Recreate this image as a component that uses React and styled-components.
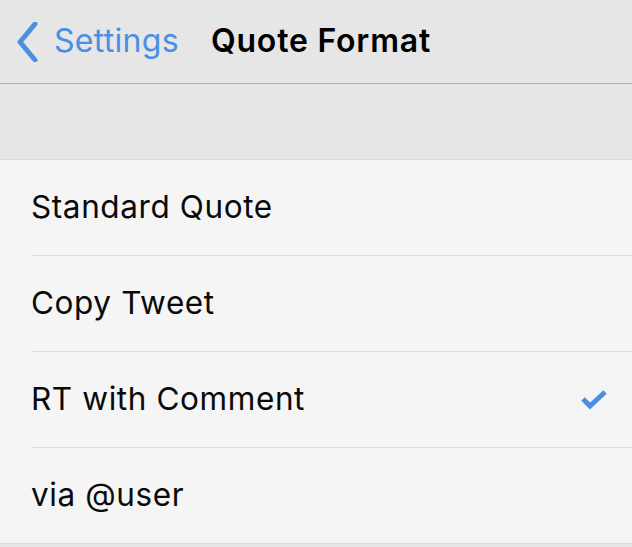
import styled, { createGlobalStyle } from "styled-components";

const GlobalStyle = createGlobalStyle`
  html, body {
    margin: 0;
    padding: 0;
    background: #e6e6e6;
  }
  body {
    font-family: Inter, "Noto Sans", sans-serif;
    -webkit-font-smoothing: antialiased;
  }
`;

const Page = styled.div`
  width: 632px;
  height: 547px;
  background: #e6e6e6;
  overflow: hidden;
`;

const NavBar = styled.div`
  height: 81px;
  padding-bottom: 2px;
  display: flex;
  align-items: center;
  border-bottom: 1px solid #b2b2b2;
  background: #e6e6e6;
  box-sizing: content-box;
`;

const BackButton = styled.div`
  display: flex;
  align-items: center;
  gap: 16px;
  padding-left: 16px;
  color: #4a8fe3;
  font-size: 32px;
  letter-spacing: 0.3px;

  svg {
    display: block;
    margin-top: 2px;
  }
`;

const Title = styled.div`
  margin-left: 32px;
  font-size: 32px;
  font-weight: 600;
  color: #000;
  letter-spacing: 0.8px;
`;

const Spacer = styled.div`
  height: 75px;
`;

const List = styled.div`
  background: #f5f5f5;
  border-top: 1px solid #dadada;
  border-bottom: 1px solid #dadada;
`;

const Row = styled.div`
  height: ${(p) => (p.$first ? "95px" : "96px")};
  display: flex;
  align-items: center;
  justify-content: space-between;
  padding-right: 24px;
  border-top: ${(p) => (p.$first ? "none" : "1px solid #dcdcdc")};
  margin-left: ${(p) => (p.$first ? "0" : "31px")};
  padding-left: ${(p) => (p.$first ? "31px" : "0")};
  font-size: 31.5px;
  color: #0a0a0a;
  letter-spacing: 0.6px;
  padding-bottom: 2px;
  box-sizing: border-box;
`;

const Check = styled.svg`
  display: block;
`;

const items = [
  { label: "Standard Quote" },
  { label: "Copy Tweet" },
  { label: "RT with Comment", selected: true },
  { label: "via @user" },
];

export default function App() {
  return (
    <Page>
      <GlobalStyle />
      <NavBar>
        <BackButton>
          <svg width="22" height="40" viewBox="0 0 22 40">
            <path
              d="M19 2 L4 20 L19 38"
              fill="none"
              stroke="#4a8fe3"
              strokeWidth="5"
              strokeLinecap="round"
              strokeLinejoin="round"
            />
          </svg>
          Settings
        </BackButton>
        <Title>Quote Format</Title>
      </NavBar>
      <Spacer />
      <List>
        {items.map((item, i) => (
          <Row key={item.label} $first={i === 0}>
            {item.label}
            {item.selected && (
              <Check width="28" height="22" viewBox="0 0 28 22">
                <path
                  d="M3 11 L10 18 L25 4"
                  fill="none"
                  stroke="#4a8fe3"
                  strokeWidth="5"
                  strokeLinejoin="miter"
                />
              </Check>
            )}
          </Row>
        ))}
      </List>
    </Page>
  );
}
